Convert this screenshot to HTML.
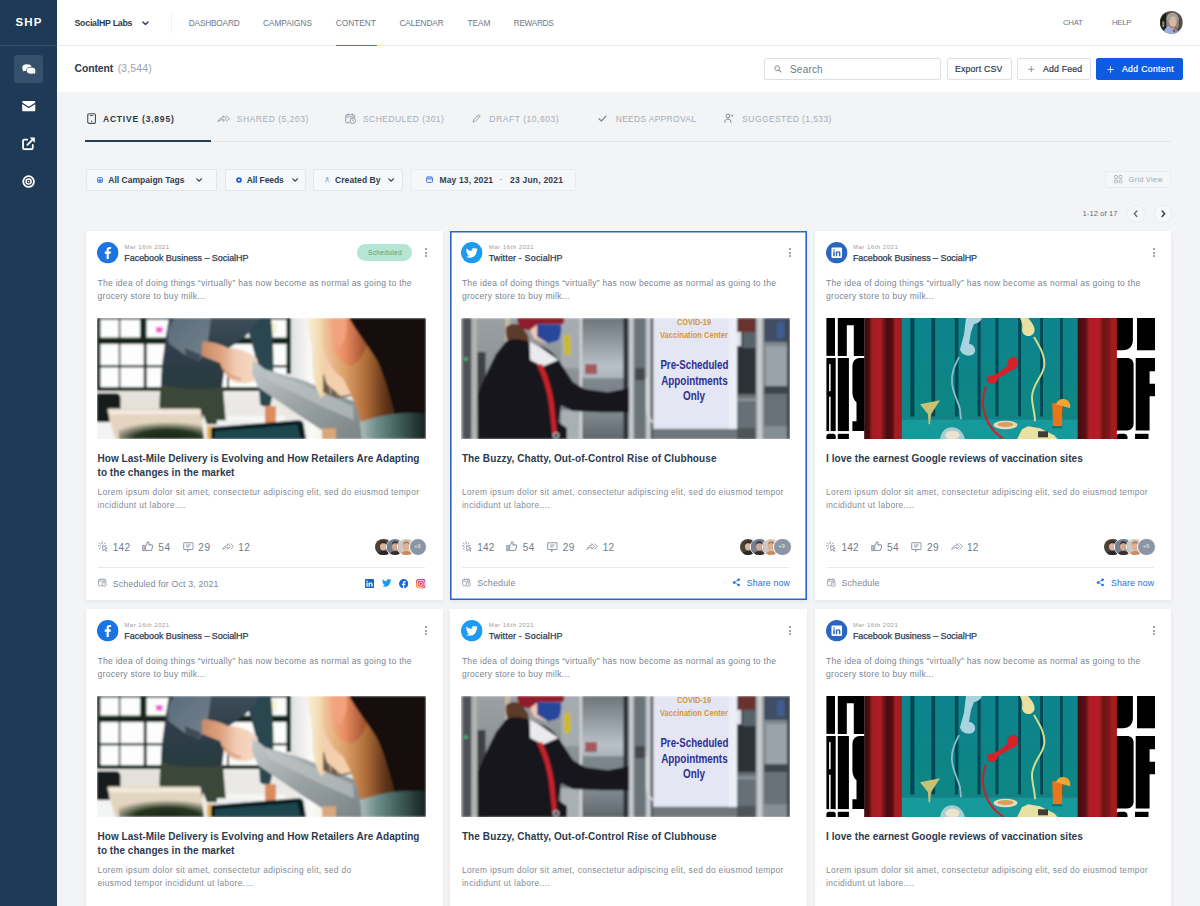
<!DOCTYPE html>
<html lang="en">
<head>
<meta charset="utf-8">
<title>SocialHP - Content</title>
<style>

*{box-sizing:border-box;margin:0;padding:0}
html,body{width:1200px;height:906px;overflow:hidden}
body{font-family:"Liberation Sans",Arial,sans-serif;background:#f3f4f6;color:#2b3a4e;position:relative;font-size:9px}
.t{position:absolute;white-space:nowrap;line-height:1}
.a{position:absolute}
svg{position:absolute;overflow:visible}
#side{position:absolute;left:0;top:0;width:57px;height:906px;background:#1f3a57}
#side .ln{position:absolute;left:0;top:45px;width:57px;height:1px;background:#35506c}
#side .act{position:absolute;left:14px;top:55px;width:29px;height:28px;border-radius:3px;background:#35506b}
#top{position:absolute;left:57px;top:0;width:1143px;height:46px;background:#fff;border-bottom:1px solid #e8ebef}
#hdr{position:absolute;left:57px;top:46px;width:1143px;height:46px;background:#fff}
.btn{position:absolute;top:58px;height:22px;border:1px solid #dde1e6;border-radius:2px;background:#fff}
.flt{position:absolute;top:169px;height:22px;border:1px solid #e3e6eb;border-radius:2px;background:#f5f7f9}
.card{position:absolute;width:356.500px;height:369px;background:#fff;box-shadow:0 2px 4px rgba(30,50,80,.07)}
.card.sel{box-shadow:inset 0 0 0 1.600px #2c64c8,0 2px 4px rgba(30,50,80,.07)}
.img{position:absolute;left:11px;top:87.200px;width:329px;height:121.300px;overflow:hidden}
.img svg{left:0;top:0}
.div{position:absolute;left:12px;top:336px;width:327px;height:1px;background:#e6e9ed}
.dot{position:absolute;width:2px;height:2px;border-radius:50%;background:#7d8795}
.av{position:absolute;width:18.600px;height:18.600px;border-radius:50%;border:.8px solid #fff;overflow:hidden}

</style>
</head>
<body>
<svg width="0" height="0" style="position:absolute;left:-10px;top:-10px"><defs>
<symbol id="i-chat" viewBox="0 0 28 22"><path d="M2.500 15.500L1 11h6z" fill="#fff"/><ellipse cx="10" cy="7.500" rx="9.500" ry="6.800" fill="#fff"/><ellipse cx="18.500" cy="13" rx="10" ry="7.300" fill="#35506b"/><path d="M26 21l1.500-5h-6z" fill="#fff"/><ellipse cx="18.500" cy="13.500" rx="8.800" ry="6.200" fill="#fff"/></symbol>
<symbol id="i-mail" viewBox="0 0 14 11"><path d="M1.300 0h11.400c.7 0 1.300.6 1.300 1.300v.4L7 6.200 0 1.700v-.4C0 .6.600 0 1.300 0zM0 3.300l7 4.500 7-4.500v6.400c0 .7-.6 1.300-1.300 1.300H1.300C.6 11 0 10.400 0 9.700z" fill="#fff"/></symbol>
<symbol id="i-ext" viewBox="0 0 14 14"><path d="M5.500 2.700H2.200C1.500 2.700 1 3.200 1 3.900v7.900c0 .7.500 1.200 1.200 1.200h7.900c.7 0 1.200-.5 1.200-1.200V8.500" fill="none" stroke="#fff" stroke-width="1.900" stroke-linecap="round"/><path d="M5.600 8.400L12 2" stroke="#fff" stroke-width="2" stroke-linecap="round"/><path d="M8 .5h5.500V6z" fill="#fff"/></symbol>
<symbol id="i-target" viewBox="0 0 14 14"><circle cx="7" cy="7" r="5.700" fill="none" stroke="#fff" stroke-width="1.900"/><circle cx="7" cy="7" r="2.700" fill="none" stroke="#fff" stroke-width="1.500"/><circle cx="7" cy="7" r=".9" fill="#fff"/></symbol>
<symbol id="i-chev" viewBox="0 0 8 5"><path d="M1 1l3 3 3-3" fill="none" stroke="#2b3a4e" stroke-width="1.500" stroke-linecap="round" stroke-linejoin="round"/></symbol>
<symbol id="i-phone" viewBox="0 0 10 12"><rect x=".8" y=".8" width="8.400" height="10.400" rx="1.500" fill="none" stroke="currentColor" stroke-width="1.200"/><path d="M3 2.600h4" stroke="currentColor" stroke-width="1" /><circle cx="5" cy="8.800" r=".8" fill="currentColor"/></symbol>
<symbol id="i-share2" viewBox="0 0 13 8"><path d="M.5 7.400C1.600 4.300 3.600 2.800 6.300 2.700V.7L9.300 3.800 6.300 6.900V4.900C3.900 4.900 2.100 5.500.5 7.400z" fill="none" stroke="currentColor" stroke-width=".95" stroke-linejoin="round"/><path d="M9.500.8l3 3-3 3" fill="none" stroke="currentColor" stroke-width="1" stroke-linejoin="round" stroke-linecap="round"/></symbol>
<symbol id="i-cal" viewBox="0 0 12 12"><path d="M10.300 5V2.800c0-.6-.4-1-1-1H1.800c-.6 0-1 .4-1 1v6.500c0 .6.400 1 1 1H5" fill="none" stroke="currentColor" stroke-width="1"/><path d="M.8 4.200h9.500M3.300.6v2.200M7.800.6v2.200" stroke="currentColor" stroke-width="1" fill="none"/><circle cx="8.300" cy="8.300" r="2.900" fill="none" stroke="currentColor" stroke-width="1"/><path d="M8.300 6.900v1.500l1 .6" fill="none" stroke="currentColor" stroke-width=".9"/></symbol>
<symbol id="i-pen" viewBox="0 0 10 10"><path d="M1.200 8.800l.5-2.400L6.700 1.400c.5-.5 1.300-.5 1.800 0s.5 1.300 0 1.800L3.500 8.200z" fill="none" stroke="currentColor" stroke-width="1" stroke-linejoin="round"/><path d="M5.800 2.300l1.800 1.800" stroke="currentColor" stroke-width=".9"/></symbol>
<symbol id="i-check" viewBox="0 0 10 8"><path d="M1 4.300l2.700 2.600L9 1.200" fill="none" stroke="currentColor" stroke-width="1.400" stroke-linecap="round" stroke-linejoin="round"/></symbol>
<symbol id="i-user" viewBox="0 0 11 11"><circle cx="4.300" cy="3.200" r="2" fill="none" stroke="currentColor" stroke-width="1.100"/><path d="M.8 10.200c0-2.200 1.500-3.600 3.500-3.600s3.500 1.400 3.500 3.600" fill="none" stroke="currentColor" stroke-width="1.100" stroke-linecap="round"/><path d="M9 1.400l.45.900.95.150-.7.650.2.950L9 3.600l-.9.450.2-.950-.7-.65.950-.150z" fill="currentColor"/></symbol>
<symbol id="i-tag" viewBox="0 0 7 7"><rect x=".6" y=".6" width="5.800" height="5.800" rx="1.200" fill="#cfe0fb" stroke="#2f6fe0" stroke-width="1"/><rect x="1.800" y="3" width="3.400" height="2.300" fill="#2f6fe0"/></symbol>
<symbol id="i-feed" viewBox="0 0 7 7"><circle cx="3.500" cy="3.500" r="3.300" fill="#1d5fdc"/><circle cx="3.500" cy="3.500" r="1.200" fill="#fff"/></symbol>
<symbol id="i-usr2" viewBox="0 0 6 7"><circle cx="3" cy="1.700" r="1.200" fill="none" stroke="#4f86e6" stroke-width=".9"/><path d="M.7 6.300C.9 4.700 1.800 3.900 3 3.900s2.100.8 2.300 2.400" fill="none" stroke="#4f86e6" stroke-width=".9" stroke-linecap="round"/></symbol>
<symbol id="i-cal2" viewBox="0 0 8 8"><rect x=".6" y="1.200" width="6.800" height="6.200" rx="1.200" fill="#e4ecfc" stroke="#3d6fe0" stroke-width="1"/><path d="M.6 3.200h6.800" stroke="#3d6fe0" stroke-width="1"/><path d="M2.400.3v1.500M5.600.3v1.500" stroke="#3d6fe0" stroke-width=".9"/></symbol>
<symbol id="i-search" viewBox="0 0 9 9"><circle cx="3.700" cy="3.700" r="2.700" fill="none" stroke="#7d8795" stroke-width="1.100"/><path d="M5.800 5.800l2.500 2.500" stroke="#7d8795" stroke-width="1.200" stroke-linecap="round"/></symbol>
<symbol id="i-plus" viewBox="0 0 8 8"><path d="M4 .8v6.400M.8 4h6.400" stroke="currentColor" stroke-width="1" stroke-linecap="round"/></symbol>
<symbol id="i-grid" viewBox="0 0 10 10"><rect x=".6" y=".6" width="3.400" height="3.400" rx=".8" fill="none" stroke="#9aa3af" stroke-width=".9"/><rect x="6" y=".6" width="3.400" height="3.400" rx=".8" fill="none" stroke="#9aa3af" stroke-width=".9"/><rect x=".6" y="6" width="3.400" height="3.400" rx=".8" fill="none" stroke="#9aa3af" stroke-width=".9"/><rect x="6" y="6" width="3.400" height="3.400" rx=".8" fill="none" stroke="#9aa3af" stroke-width=".9"/></symbol>
<symbol id="i-click" viewBox="0 0 11 12"><path d="M4.800 4.600l.9 6 1.400-1.700 1.700 2.300.9-.7-1.600-2.200 2-.6z" fill="none" stroke="currentColor" stroke-width="1" stroke-linejoin="round"/><path d="M4.600.6v1.800M1.300 1.800l1.300 1.300M.4 5h1.800M1.500 8.200l1.200-1.200M7.900 1.800L6.700 3.100M8.900 4.800H7.600" stroke="currentColor" stroke-width="1.100" stroke-linecap="round"/></symbol>
<symbol id="i-like" viewBox="0 0 12 11"><path d="M.8 4.800h1.600v5.400H.8z" fill="none" stroke="currentColor" stroke-width="1.150" stroke-linejoin="round"/><path d="M3.900 10V5l2.300-4.200c.9 0 1.500.6 1.400 1.600L7.300 4.100h2.900c.8 0 1.300.7 1.100 1.500l-.9 3.500c-.2.600-.7 1-1.300 1z" fill="none" stroke="currentColor" stroke-width="1.150" stroke-linejoin="round"/></symbol>
<symbol id="i-cmt" viewBox="0 0 12 11"><path d="M1.600.8h8.800c.5 0 .8.300.8.800v5.800c0 .5-.3.800-.8.800H6.800L4.900 10.300V8.200H1.600c-.5 0-.8-.3-.8-.8V1.600c0-.5.300-.8.800-.8z" fill="none" stroke="currentColor" stroke-width="1.150" stroke-linejoin="round"/><path d="M3.200 3.300h5.600M3.200 5.300h4" stroke="currentColor" stroke-width="1"/></symbol>
<symbol id="i-shr" viewBox="0 0 10 10"><circle cx="7.600" cy="2" r="1.400" fill="#1d6fe0"/><circle cx="2.300" cy="5" r="1.400" fill="#1d6fe0"/><circle cx="7.600" cy="8" r="1.400" fill="#1d6fe0"/><path d="M7.600 2L2.300 5l5.300 3" fill="none" stroke="#1d6fe0" stroke-width=".9"/></symbol>
<symbol id="i-fb" viewBox="0 0 22 22"><circle cx="11" cy="11" r="11" fill="#1b74e4"/><path d="M12.100 17.500v-5.600h1.900l.3-2.200h-2.200V8.300c0-.6.200-1.100 1.100-1.100h1.200V5.200c-.2 0-.9-.1-1.700-.1-1.700 0-2.900 1-2.900 3v1.600H7.900v2.200h1.900v5.600z" fill="#fff"/></symbol>
<symbol id="i-tw" viewBox="0 0 22 22"><circle cx="11" cy="11" r="11" fill="#1d9bf0"/><path d="M17.200 7.400c-.5.200-1 .3-1.500.4.500-.3.900-.8 1.100-1.400-.5.300-1 .5-1.600.6-.5-.5-1.100-.8-1.900-.8-1.400 0-2.500 1.100-2.500 2.500 0 .2 0 .4.100.6-2.100-.1-4-1.100-5.200-2.600-.2.400-.3.800-.3 1.300 0 .9.400 1.600 1.100 2.100-.4 0-.8-.1-1.100-.3 0 1.200.9 2.200 2 2.500-.4.100-.8.100-1.100 0 .3 1 1.200 1.700 2.400 1.800-1 .8-2.300 1.200-3.700 1 1.100.7 2.400 1.100 3.900 1.100 4.600 0 7.200-3.800 7.200-7.200v-.3c.4-.3.800-.800 1.100-1.300z" fill="#fff"/></symbol>
<symbol id="i-li" viewBox="0 0 22 22"><circle cx="11" cy="11" r="11" fill="#2a66bf"/><rect x="5.600" y="5.600" width="10.800" height="10.800" rx="1.300" fill="#fff"/><path d="M7.400 9.700h1.500v4.900H7.400zM8.150 7.300a.850.850 0 110 1.700.850.850 0 010-1.700zM10 9.700h1.400v.65c.3-.5.850-.8 1.600-.8 1.450 0 1.750.95 1.750 2.150v2.900h-1.500v-2.550c0-.6 0-1.300-.8-1.300s-.95.600-.95 1.250v2.600H10z" fill="#2a66bf"/></symbol>
<symbol id="s-li" viewBox="0 0 10 10"><rect width="10" height="10" rx="1" fill="#1668c5"/><path d="M1.600 3.900h1.400v4.500H1.600zM2.300 1.600a.8.800 0 110 1.600.8.800 0 010-1.600zM3.900 3.900h1.300v.6c.3-.5.800-.75 1.500-.75 1.400 0 1.700.9 1.700 2.100v2.550H7V6.100c0-.55 0-1.200-.8-1.200s-.9.600-.9 1.200v2.300H3.900z" fill="#fff"/></symbol>
<symbol id="s-tw" viewBox="0 0 12 10"><path d="M11.800 1.200c-.4.200-.9.300-1.400.4.500-.3.900-.8 1.100-1.400-.5.300-1 .500-1.500.6C9.500.3 8.900 0 8.200 0 6.800 0 5.800 1.100 5.800 2.400c0 .2 0 .4.100.5C3.800 2.800 2 1.900.8.400.6.800.5 1.200.5 1.600c0 .8.400 1.600 1.100 2-.4 0-.8-.1-1.100-.3 0 1.200.8 2.200 1.900 2.400-.4.100-.7.100-1.100 0 .3 1 1.200 1.700 2.300 1.700C2.600 8.200 1.300 8.600 0 8.500c1.100.7 2.400 1.100 3.700 1.100 4.500 0 6.900-3.700 6.900-6.900v-.3c.5-.300.9-.800 1.200-1.200z" fill="#1d9bf0"/></symbol>
<symbol id="s-fb" viewBox="0 0 10 10"><circle cx="5" cy="5" r="5" fill="#1668e0"/><path d="M5.600 9.900V6.400h1.100l.2-1.400H5.600v-.9c0-.4.100-.7.700-.7H7V2.200c-.1 0-.5-.1-1-.1-1.100 0-1.800.6-1.800 1.800V5H3.100v1.400h1.100v3.500z" fill="#fff"/></symbol>
<symbol id="s-ig" viewBox="0 0 10 10"><rect width="10" height="10" rx="2.600" fill="url(#igg)"/><rect x="1.400" y="1.400" width="7.200" height="7.200" rx="2" fill="none" stroke="#fff" stroke-width=".9"/><circle cx="5" cy="5" r="1.800" fill="none" stroke="#fff" stroke-width=".9"/><circle cx="7.400" cy="2.600" r=".5" fill="#fff"/></symbol>
<linearGradient id="igg" x1="0" y1="1" x2="1" y2="0"><stop offset="0" stop-color="#fdbb4c"/><stop offset=".35" stop-color="#f1503d"/><stop offset=".7" stop-color="#d92c86"/><stop offset="1" stop-color="#8a3ac8"/></linearGradient>
<symbol id="img1" viewBox="0 0 329 121" preserveAspectRatio="none"><defs>
<linearGradient id="g1w" x1="0" y1="0" x2="1" y2="0"><stop offset="0" stop-color="#dfe2e0"/><stop offset=".4" stop-color="#fafaf8"/><stop offset="1" stop-color="#f2ead8"/></linearGradient>
<linearGradient id="g1t" x1="0" y1="0" x2="0" y2="1"><stop offset="0" stop-color="#3d4e59"/><stop offset=".5" stop-color="#2e3d48"/><stop offset="1" stop-color="#2a3a40"/></linearGradient>
<linearGradient id="g1s" x1="0" y1="0" x2="1" y2="1"><stop offset="0" stop-color="#5a6b7a"/><stop offset="1" stop-color="#74828d"/></linearGradient>
<linearGradient id="g1h" x1="0" y1="0" x2="1" y2="0"><stop offset="0" stop-color="#c88a66"/><stop offset=".35" stop-color="#dfa684"/><stop offset=".6" stop-color="#f3cdb4"/><stop offset="1" stop-color="#f6dcc8"/></linearGradient>
<linearGradient id="g1a" x1="0" y1="0" x2="1" y2="1"><stop offset="0" stop-color="#c3c9ca"/><stop offset=".5" stop-color="#9aa2a4"/><stop offset="1" stop-color="#7a8385"/></linearGradient>
<linearGradient id="g1n" x1="0" y1="0" x2="1" y2="0"><stop offset="0" stop-color="#f2c8a0"/><stop offset=".25" stop-color="#dca06a"/><stop offset=".48" stop-color="#b06e38"/><stop offset=".7" stop-color="#5e3418"/><stop offset="1" stop-color="#1c0f08"/></linearGradient>
<linearGradient id="g1e" x1="0" y1="0" x2="1" y2="0"><stop offset="0" stop-color="#f4b892"/><stop offset=".45" stop-color="#e88c62"/><stop offset="1" stop-color="#9a4c2a"/></linearGradient>
<linearGradient id="g1b" x1="0" y1="0" x2="1" y2="0"><stop offset="0" stop-color="#faf3e4"/><stop offset=".5" stop-color="#f2d9ae"/><stop offset="1" stop-color="#e6b982"/></linearGradient>
<radialGradient id="g1l" cx=".58" cy="1" r=".7"><stop offset="0" stop-color="#142414"/><stop offset=".55" stop-color="#24361f"/><stop offset="1" stop-color="#24361f" stop-opacity="0"/></radialGradient>
<linearGradient id="g1k" x1="0" y1="0" x2="1" y2="0"><stop offset="0" stop-color="#aebcba"/><stop offset=".25" stop-color="#6f8f8b"/><stop offset=".6" stop-color="#3f5d59"/><stop offset="1" stop-color="#16211f"/></linearGradient>
</defs><g filter="url(#bl1)">

<rect width="329" height="121" fill="#f4f5f3"/>
<rect x="0" y="0" width="194" height="73" fill="#fcfdfc"/>
<g fill="#13261f">
<rect x="0" y="0" width="194" height="1.600"/>
<rect x="0" y="0" width="3.400" height="73"/>
<rect x="0" y="19.500" width="194" height="6.500"/>
<rect x="0" y="47" width="194" height="2.200"/>
<rect x="0" y="69" width="194" height="4.200"/>
<rect x="21.800" y="0" width="1.500" height="70"/>
<rect x="43.200" y="0" width="6.300" height="26"/>
<rect x="46.800" y="24" width="2.800" height="46"/>
<rect x="130" y="47" width="2" height="24"/>
<rect x="189.500" y="0" width="4.500" height="56"/>
</g>
<rect x="59" y="9" width="6.500" height="5.500" fill="#f45fd2"/>
<rect x="166" y="5" width="14" height="10" fill="#f6f5cf"/>
<!-- wall right of window -->
<rect x="194" y="0" width="50" height="121" fill="url(#g1w)"/>
<!-- lower wall / couch -->
<rect x="0" y="73" width="200" height="48" fill="#efeeea"/>
<rect x="22" y="74" width="44" height="20" fill="#e5e2db"/>
<rect x="128" y="76" width="70" height="32" fill="#ebe9e5"/>
<rect x="128" y="98" width="60" height="10" fill="#f6f6f4"/>
<!-- chair -->
<path d="M0 75h19c3 0 4.500 2 4.500 5v11H12.500v13H0z" fill="#131a1d"/>
<rect x="0" y="104" width="18" height="17" fill="#f3f4f4"/>
<!-- right arm / elbow of the man -->
<path d="M146 0h28c2 18 3 40 2 62 0 10-1 20-3 26-4 1-8 0-10-2l-2-36c-4-18-9-36-15-50z" fill="#2a4750"/>
<rect x="168" y="88" width="11" height="17" fill="#dc8b5e"/>
<!-- man torso -->
<path d="M72 0h90c-4 8-10 16-18 22l-12 8-4 16-3 24c-18 2-40 2-61-3 0-10 1-22 3-34 1-12 3-22 5-33z" fill="url(#g1t)"/>
<!-- sleeve -->
<path d="M70.800 12L77.200 0H114l-3 23.400-8.300 19.800-14.200-5.700L71.500 25z" fill="url(#g1s)"/>
<path d="M88 30l16 7-1.500 6-14-5.500z" fill="#3f4c58"/>
<!-- pants -->
<path d="M64 66c18 5 42 6 62 3l3 37h-19l-4-10-2 11H64c-2-14-2-28 0-41z" fill="#3a4737"/>
<!-- hands -->
<path d="M105 24c8-1 18 2 26 6 12 0 22 4 29 11l3 13-6 9c-9 3-18 3-24-2-5-4-8-10-10-16l-18-7z" fill="url(#g1h)"/>
<path d="M126 50c4 6 10 10 18 11" fill="none" stroke="#c88866" stroke-width="1.200"/>
<!-- woman sleeve -->
<path d="M156 42l12 9 38 11 56 23 3 36h-26l-34-22-44-30-6-14z" fill="url(#g1a)"/>
<path d="M168 53l38 13 50 22 1 14-28-12-58-28z" fill="#c2c8c9" opacity=".6"/>
<!-- blonde hair -->
<path d="M208 0h30c2 20 0 44-4 70l-10 10c-6-10-9-22-9-34 1-16-2-30-7-46z" fill="url(#g1b)"/>
<path d="M226 56l22 3 6 19-14 2-14-6z" fill="#6e5a4c"/>
<path d="M232 60l2 16M239 61l2 17" stroke="#c8b8a0" stroke-width="1"/>
<!-- ear / face skin -->
<path d="M226 0h44l22 44 24 64-50 4c-4-16-8-28-14-38l-10-10-12-8c-4-16-6-36-4-56z" fill="url(#g1n)"/>
<path d="M230 0h30l10 26c-2 10-8 18-16 22-8-2-16-8-20-20z" fill="url(#g1e)"/>
<path d="M235 0h14c2 10 0 22-6 29-5-4-8-16-8-29z" fill="#f2a27c"/>
<path d="M226 30c4 14 10 24 20 30l8 16-10 2-14-12c-4-10-5-22-4-36z" fill="#f4cfae"/>
<!-- dark hair -->
<path d="M252 0h77v104l-28 6c-6-26-12-48-20-66-8-14-20-28-29-44z" fill="#130c0a"/>
<!-- sweater bottom right -->
<path d="M263 104c20-8 46-11 66-9v26h-64z" fill="url(#g1k)"/>
<!-- laptop -->
<path d="M10.500 92c0-1 .8-1.600 2-1.600h89c1.500 0 2.300.8 2.500 2l3 28.600H18z" fill="#e4d5c1"/>
<path d="M12 92h90l1 4H13z" fill="#f3ebe0"/>
<path d="M20 96h84l3 25H22z" fill="url(#g1l)"/>
<!-- table leg & misc -->
<rect x="110" y="108" width="8" height="13" fill="#e0ae55"/>
<rect x="120" y="102" width="34" height="8" fill="#eef0f1"/>
<rect x="225" y="110" width="14" height="11" fill="#d9a77c"/>
<!-- tablet -->
<path d="M114 112c0-2 1-3 3-3.300l84-6.700c3 0 5 1 5.500 3.500l2.500 15.500H114z" fill="#0f1b22"/>
<path d="M118 113l82-6.500 4 14.500h-86z" fill="#1b4750"/>
</g></symbol><symbol id="img2" viewBox="0 0 329 121" preserveAspectRatio="none"><defs>
<linearGradient id="g2a" x1="0" y1="0" x2="0" y2="1"><stop offset="0" stop-color="#6d757b"/><stop offset=".4" stop-color="#b9c1c8"/><stop offset=".7" stop-color="#8e979d"/><stop offset="1" stop-color="#5e666b"/></linearGradient>
<linearGradient id="g2b" x1="0" y1="0" x2="0" y2="1"><stop offset="0" stop-color="#9aa0a3"/><stop offset=".5" stop-color="#8a9094"/><stop offset="1" stop-color="#6a7074"/></linearGradient>
<linearGradient id="g2c" x1="0" y1="0" x2="1" y2="0"><stop offset="0" stop-color="#9ea3a7"/><stop offset=".5" stop-color="#d5d8db"/><stop offset="1" stop-color="#8b9094"/></linearGradient>
</defs><g filter="url(#bl2)">

<rect width="329" height="121" fill="#858b90"/>
<!-- far-left dark panel -->
<rect x="0" y="0" width="10.500" height="121" fill="#4d5154"/>
<rect x="0" y="0" width="2" height="121" fill="#8a8d90"/>
<circle cx="5" cy="41" r="1.800" fill="#35c77c"/>
<rect x="10.500" y="0" width="6" height="121" fill="#b3b3b1"/>
<rect x="16.500" y="0" width="36" height="121" fill="url(#g2b)"/>
<rect x="16.500" y="34" width="8" height="87" fill="#3c4044"/>
<rect x="44" y="0" width="5" height="24" fill="#c9b9a4"/>
<!-- middle glass -->
<rect x="52" y="0" width="67" height="121" fill="url(#g2b)"/>
<rect x="100" y="0" width="18" height="50" fill="#a4acb1"/>
<rect x="103" y="17" width="6.500" height="20" fill="#cdb928"/>
<rect x="100" y="92" width="20" height="29" fill="#a9b0b4"/>
<!-- frame -->
<rect x="118.500" y="0" width="3" height="121" fill="#d0d3d6"/>
<!-- right glass of left door -->
<rect x="121.500" y="0" width="45" height="121" fill="url(#g2a)"/>
<rect x="124" y="46" width="12" height="10" fill="#a25a60"/>
<rect x="121.500" y="60" width="45" height="14" fill="#6c757b" opacity=".7"/>
<!-- door frames centre -->
<rect x="162.500" y="0" width="5" height="121" fill="#2c3034"/>
<rect x="167.500" y="0" width="6" height="121" fill="url(#g2c)"/>
<rect x="173.500" y="0" width="11" height="121" fill="#6b7379"/>
<rect x="174" y="50" width="10" height="12" fill="#44494d"/>
<rect x="184.500" y="0" width="6" height="121" fill="url(#g2c)"/><rect x="190" y="0" width="2.500" height="121" fill="#4a5055"/>
<path d="M186 60v30c0 8 3 12 6 14" fill="none" stroke="#d8dadc" stroke-width="2"/>
<!-- right of sign -->
<rect x="276" y="0" width="19" height="121" fill="#3a4146"/>
<rect x="277" y="0" width="17" height="14" fill="#6a302d"/>
<rect x="276" y="14" width="4" height="14" fill="#dfe3e8"/>
<rect x="282" y="14" width="13" height="16" fill="#59636a"/>
<rect x="276" y="30" width="19" height="46" fill="#2b3136"/>
<rect x="276" y="76" width="19" height="34" fill="#666f75"/>
<rect x="276" y="80" width="19" height="3" fill="#8a9298"/>
<rect x="276" y="110" width="19" height="11" fill="#4d555a"/>
<rect x="295" y="0" width="8" height="121" fill="url(#g2c)"/>
<rect x="303" y="0" width="26" height="121" fill="#7f888f"/>
<rect x="303" y="0" width="26" height="24" fill="#3f4d62"/>
<rect x="316" y="4" width="7" height="16" fill="#3f5d92"/>
<rect x="305" y="28" width="22" height="40" fill="#9aa3aa"/>
<rect x="303" y="68" width="26" height="8" fill="#3e464c"/>
<rect x="303" y="76" width="26" height="34" fill="#687177"/>
<rect x="303" y="108" width="26" height="13" fill="#858e94"/>
<rect x="326" y="0" width="3" height="121" fill="#3a4045"/>
<!-- bottom strip -->
<rect x="192" y="110" width="84" height="11" fill="#6f777c"/>
<!-- sign -->
<rect x="192.300" y="0" width="83.700" height="110.500" fill="#e4e6f3"/>
<rect x="268" y="0" width="8" height="110.500" fill="#eceef8"/>

<!-- person -->
<path d="M45 10c2-4 8-5 14-3l8 10 2 14-18-2c-5-5-7-12-6-19z" fill="#5b3b2b"/>
<path d="M56 0h47c1 2 0 5-2 6.500L74 8l-3 5-10-2c-3-3-5-7-5-11z" fill="#8e1e2c"/>
<path d="M69 12l8-6 23 .500c1 6 0 12-3 17l-12 2-12-5z" fill="#f0c8b4"/>
<path d="M76 6l24 .500c1 6 0 12-3 16.500l-10 2.500-11-7z" fill="#25479b"/>
<path d="M45 23.400C52 20 60 21 68 24l16 6c6 3 10 7 13.500 12L112 64l12 7 23 3 21-4v24h-28l-28.400-1.200L100 87l-2.500 17 8.500 6v11H17l-.300-45.200L26.600 53 35 36z" fill="#12161e"/>
<path d="M68.400 23.400l9 4.500 20 14-15.500 6.400-12.700-6.300z" fill="#ebebee"/>
<path d="M76 47l5-1c6 12 10 26 12 40l3 30h-4.500l-3.500-30c-2-14-6-27-12-39z" fill="#c8222c"/>
<circle cx="95" cy="117" r="2.600" fill="none" stroke="#d8d8dc" stroke-width="1"/>

</g></symbol><symbol id="img3" viewBox="0 0 329 121" preserveAspectRatio="none"><defs>
<linearGradient id="g3t" x1="0" y1="0" x2="0" y2="1"><stop offset="0" stop-color="#08838d"/><stop offset="1" stop-color="#078781"/></linearGradient><linearGradient id="g3r" x1="0" y1="0" x2="1" y2="0"><stop offset="0" stop-color="#3a090c"/><stop offset=".12" stop-color="#4a0c10"/><stop offset=".2" stop-color="#9c1a20"/><stop offset=".42" stop-color="#b01e26"/><stop offset=".52" stop-color="#74141a"/><stop offset=".62" stop-color="#470c10"/><stop offset=".76" stop-color="#5a0f13"/><stop offset=".82" stop-color="#a81c22"/><stop offset="1" stop-color="#a01a20"/></linearGradient>
<linearGradient id="g3s" x1="0" y1="0" x2="1" y2="0"><stop offset="0" stop-color="#460c10"/><stop offset=".2" stop-color="#5a0f14"/><stop offset=".3" stop-color="#b21e27"/><stop offset=".55" stop-color="#b21e27"/><stop offset=".65" stop-color="#6c1216"/><stop offset=".78" stop-color="#7a1418"/><stop offset=".85" stop-color="#a01a20"/><stop offset="1" stop-color="#a41b22"/></linearGradient>
</defs><g filter="url(#bl3)">

<rect width="329" height="121" fill="#fff"/>
<!-- teal wall -->
<rect x="75" y="0" width="177" height="121" fill="url(#g3t)"/>
<g fill="#064752">
<rect x="84.300" y="0" width="4" height="99"/><rect x="105.500" y="0" width="3.600" height="99"/><rect x="128.900" y="0" width="3.500" height="99"/><rect x="151.600" y="0" width="3" height="99"/><rect x="169.600" y="0" width="2.800" height="99"/><rect x="192.200" y="0" width="2.800" height="99"/><rect x="214.200" y="0" width="2.800" height="99"/><rect x="234" y="0" width="2.800" height="99"/>
</g>
<rect x="75" y="98.400" width="177" height="22.600" fill="#18999a"/>
<rect x="75" y="98.400" width="177" height="3" fill="#0f7278" opacity=".6"/>
<!-- curtains -->
<rect x="38.200" y="0" width="37.600" height="121" fill="url(#g3r)"/>
<!-- left letters -->
<g fill="#000">
<rect x=".400" y="0" width="8.600" height="37.800"/>
<path d="M11.800 0H38.200V37.800H27.800V7.200H20.800V37.800H11.800z"/>
<rect x=".400" y="39.900" width="9.300" height="72.900"/>
<rect x="11.800" y="39.900" width="11.100" height="72.900"/>
<path d="M26.400 49c0-5.500 2.600-9.100 7-9.100h5v72.900h-12V103h4.100V84c-2.500-2-4.100-6-4.100-10z"/>
<path d="M.400 121v-3c0-1.500 1-2.500 2.500-2.500h4.300c1.500 0 2.500 1 2.500 2.500v3z"/>
<rect x="11.800" y="115.500" width="11.100" height="5.500"/>
</g>
<rect x="3.100" y="46" width="1.500" height="27" fill="#fff"/>
<rect x="3.100" y="78.500" width="1.500" height="34.300" fill="#fff"/>
<!-- right letters -->
<g fill="#000">
<path d="M290 0h16.900v22c0 6.500-4 10.200-10 10.200H290z"/>
<rect x="311" y="0" width="18" height="32.200"/>
<path d="M290 39.900h11c4 0 6.600 2.600 6.600 6.600v59c0 4-2.600 6.600-6.600 6.600h-11z"/>
<path d="M309.700 39.900H329V53h-5.400v12.500H329V78h-5.400v34.100h-13.900z"/>
<path d="M290 121v-2c0-2 1.500-3.500 3.500-3.500h4.500c2 0 3.500 1.500 3.500 3.500v2z"/>
<rect x="309" y="115.500" width="13.500" height="5.500"/>
</g>
<rect x="251.700" y="0" width="39.200" height="121" fill="url(#g3s)"/>
<!-- blue phone -->
<path d="M140 0h16c-1 3-4 5.500-8 6l-3 8-2 12c3 0 5.500 2 6 5s-1 6-5 6.500c-5 .500-9-2-10-6 1-5 3-10 4-15z" fill="#a9d3de"/>
<path d="M133 39c-4 8-8 16-7 26s6 18 8 26l1 10" fill="none" stroke="#8dbcc8" stroke-width="1.800"/>
<path d="M114 121c1-7 5-12 12-12s11 5 13 12z" fill="#a8cfd0"/>
<ellipse cx="126.500" cy="117" rx="7" ry="4.500" fill="#ece3cf"/>
<!-- martini -->
<path d="M94 86l20-4-9 14-1 10h-1.500l-.5-10z" fill="#c9c274"/>
<!-- red phone -->
<path d="M164 58c4-1 8-3 12-6l6-5c-1-3 0-6 3-7.500s6 0 7 3.500c1 4-2 8-6 9l-14 8c0 3-2 5-5 5.500s-6-1-6-4 1-4 3-4z" fill="#d3202b"/>
<path d="M160 68c-4 10-4 22 0 32s10 16 18 21" fill="none" stroke="#c8202a" stroke-width="2"/>
<!-- yellow phone -->
<path d="M194 0h8c3 3 6 7 6.500 11s-2 7-6 7-6-2.500-6.500-6c1-4 0-8-2-12z" fill="#e9df9e"/>
<path d="M208 19c6 10 12 20 10 30s-12 18-12 30c0 8 3 16 3 24" fill="none" stroke="#cfdc92" stroke-width="2"/>
<path d="M191 121l5-10 6-3 12 2 14 7 4 4z" fill="#e9e1a4"/>
<rect x="212" y="113" width="10" height="6" fill="#3c3c34"/>
<!-- plate -->
<ellipse cx="179.500" cy="106.800" rx="12" ry="4.200" fill="#ead9c0"/>
<ellipse cx="179.500" cy="106.300" rx="8" ry="2.500" fill="#d9a05c"/>
<!-- drink -->
<path d="M226.200 85h10.600l-.8 23h-9z" fill="#e7741f"/>
<path d="M230 86c1-4 5-6 9-5s6 5 5 9z" fill="#f2a531"/>
<rect x="226" y="108" width="10" height="2" fill="#0e6f74"/>
</g></symbol><filter id="bl1" filterUnits="userSpaceOnUse" x="0" y="0" width="329" height="121"><feGaussianBlur stdDeviation="0.9"/></filter><filter id="bl2" filterUnits="userSpaceOnUse" x="0" y="0" width="329" height="121"><feGaussianBlur stdDeviation="0.8"/></filter><filter id="bl3" filterUnits="userSpaceOnUse" x="0" y="0" width="329" height="121"><feGaussianBlur stdDeviation="0.6"/></filter></defs></svg>
<div id="side"><div class="ln"></div><div class="act"></div></div>
<div class="t" style="left:15.50px;top:16.87px;font-size:11.5px;color:#fff;font-weight:bold;letter-spacing:1.15px;">SHP</div>
<svg style="left:21.60px;top:64.00px;width:13.8px;height:10.8px;"><use href="#i-chat"/></svg>
<svg style="left:21.70px;top:101.30px;width:13.6px;height:10.4px;"><use href="#i-mail"/></svg>
<svg style="left:21.50px;top:137.20px;width:13.4px;height:13.2px;"><use href="#i-ext"/></svg>
<svg style="left:21.80px;top:174.80px;width:13.2px;height:13.2px;"><use href="#i-target"/></svg>
<div id="top"></div><div id="hdr"></div>
<div class="t" style="left:74.50px;top:18.55px;font-size:8.8px;color:#2b3a4e;font-weight:bold;letter-spacing:-0.25px;">SocialHP Labs</div>
<svg style="left:141.50px;top:20.50px;width:7px;height:4.5px;"><use href="#i-chev"/></svg>
<div class="a" style="left:171px;top:12px;width:1px;height:21px;background:#f0f1f4"></div>
<div class="t" style="left:188.75px;top:19.17px;font-size:8.3px;color:#6d7889;letter-spacing:-0.199px;">DASHBOARD</div>
<div class="t" style="left:263.00px;top:19.17px;font-size:8.3px;color:#6d7889;letter-spacing:-0.025px;">CAMPAIGNS</div>
<div class="t" style="left:335.75px;top:19.17px;font-size:8.3px;color:#6d7889;letter-spacing:-0.02px;">CONTENT</div>
<div class="t" style="left:399.50px;top:19.17px;font-size:8.3px;color:#6d7889;letter-spacing:-0.138px;">CALENDAR</div>
<div class="t" style="left:467.50px;top:19.17px;font-size:8.3px;color:#6d7889;letter-spacing:-0.021px;">TEAM</div>
<div class="t" style="left:513.75px;top:19.17px;font-size:8.3px;color:#6d7889;letter-spacing:-0.352px;">REWARDS</div>
<div class="a" style="left:335.5px;top:44.5px;width:41px;height:1.5px;background:#3b7ddd"></div>
<div class="t" style="left:1062.90px;top:19.30px;font-size:7.8px;color:#6d7889;letter-spacing:-0.25px;">CHAT</div>
<div class="t" style="left:1112.00px;top:19.30px;font-size:7.8px;color:#6d7889;letter-spacing:-0.3px;">HELP</div>
<svg style="left:1159.9px;top:11.1px;width:22.8px;height:22.8px" viewBox="0 0 24 24"><defs><clipPath id="avc"><circle cx="12" cy="12" r="12"/></clipPath><filter id="avb" x="-10%" y="-10%" width="120%" height="120%"><feGaussianBlur stdDeviation="0.7"/></filter></defs><g clip-path="url(#avc)"><rect width="24" height="24" fill="#4f4a44"/><g filter="url(#avb)"><rect x="-2" y="-2" width="8.500" height="28" fill="#1c1c19"/><rect x="2.500" y="11" width="2" height="6" fill="#8e9384"/><ellipse cx="13.200" cy="9" rx="6.600" ry="7.500" fill="#a59c92"/><path d="M7.500 9c-1.500 4-1 8 .5 10l4-2zM19 9c1.500 4 1 8-.5 10l-4-3z" fill="#8d857c"/><ellipse cx="13.600" cy="12" rx="3.900" ry="4.800" fill="#dcb4a3"/><path d="M10.500 7.500c1-2.500 5.500-3 7 .5-2.500-1-4.500-1-7-.5z" fill="#c9c0b4"/><path d="M12 16h3.500l.5 4h-4z" fill="#c58f78"/><path d="M9 15.500l3.500 3 3 5.500H3.500l1.500-5z" fill="#9cacE4"/><path d="M16 18.500l3 2v4h-4z" fill="#7f8fc8"/></g></g><circle cx="12" cy="12" r="11.800" fill="none" stroke="#fff" stroke-opacity=".25" stroke-width=".4"/></svg>
<div class="t" style="left:74.50px;top:64.20px;font-size:10.4px;color:#2b3a4e;font-weight:bold;letter-spacing:-0.1px;">Content</div>
<div class="t" style="left:117.75px;top:64.20px;font-size:10.4px;color:#9aa3af;letter-spacing:0.16px;">(3,544)</div>
<div class="btn" style="left:764px;width:176.500px"></div>
<svg style="left:773.50px;top:65.20px;width:7.8px;height:7.8px;"><use href="#i-search"/></svg>
<div class="t" style="left:790.00px;top:65.23px;font-size:10px;color:#6f7a88;letter-spacing:0.2px;">Search</div>
<div class="btn" style="left:946.5px;width:65px"></div>
<div class="t" style="left:955.00px;top:65.44px;font-size:8.7px;color:#2b3a4e;letter-spacing:0.2px;-webkit-text-stroke:.2px #2b3a4e;">Export CSV</div>
<div class="btn" style="left:1017px;width:73.500px"></div>
<svg style="left:1027.50px;top:65.80px;width:6.6px;height:6.6px;color:#7d8795;"><use href="#i-plus"/></svg>
<div class="t" style="left:1043.00px;top:65.44px;font-size:8.7px;color:#2b3a4e;letter-spacing:0.2px;-webkit-text-stroke:.2px #2b3a4e;">Add Feed</div>
<div class="btn" style="left:1096px;width:87px;background:#0c5be0;border-color:#0c5be0"></div>
<svg style="left:1106.50px;top:65.60px;width:7px;height:7px;color:#fff;"><use href="#i-plus"/></svg>
<div class="t" style="left:1122.00px;top:65.44px;font-size:8.7px;color:#fff;letter-spacing:0.33px;-webkit-text-stroke:.2px #fff;">Add Content</div>
<div class="a" style="left:86px;top:140.500px;width:1085px;height:1px;background:#e2e5ea"></div>
<div class="a" style="left:85px;top:140px;width:126px;height:2px;background:#253f5c"></div>
<svg style="left:87.00px;top:112.90px;width:9.2px;height:11.2px;color:#454d59;"><use href="#i-phone"/></svg>
<div class="t" style="left:103.00px;top:114.80px;font-size:8.5px;color:#2b3a4e;font-weight:bold;letter-spacing:0.79px;">ACTIVE (3,895)</div>
<svg style="left:217.00px;top:114.50px;width:13px;height:7.5px;color:#8f98a5;"><use href="#i-share2"/></svg>
<div class="t" style="left:236.75px;top:114.80px;font-size:8.5px;color:#a6adb8;letter-spacing:0.52px;">SHARED (5,203)</div>
<svg style="left:345.00px;top:112.50px;width:11.3px;height:11.3px;color:#8f98a5;"><use href="#i-cal"/></svg>
<div class="t" style="left:363.00px;top:114.80px;font-size:8.5px;color:#a6adb8;letter-spacing:0.44px;">SCHEDULED (301)</div>
<svg style="left:472.00px;top:113.80px;width:9px;height:9px;color:#8f98a5;"><use href="#i-pen"/></svg>
<div class="t" style="left:489.30px;top:114.80px;font-size:8.5px;color:#a6adb8;letter-spacing:0.55px;">DRAFT (10,603)</div>
<svg style="left:598.30px;top:115.00px;width:9px;height:7px;color:#7d8795;"><use href="#i-check"/></svg>
<div class="t" style="left:615.70px;top:114.80px;font-size:8.5px;color:#a6adb8;letter-spacing:0.3px;">NEEDS APPROVAL</div>
<svg style="left:724.30px;top:113.00px;width:10px;height:10px;color:#7d8795;"><use href="#i-user"/></svg>
<div class="t" style="left:742.30px;top:114.80px;font-size:8.5px;color:#a6adb8;letter-spacing:0.4px;">SUGGESTED (1,533)</div>
<div class="flt" style="left:86px;width:130.700px"></div>
<svg style="left:97.00px;top:177.00px;width:6px;height:6px;"><use href="#i-tag"/></svg>
<div class="t" style="left:108.25px;top:175.80px;font-size:8.5px;color:#2f3d52;font-weight:bold;letter-spacing:0.02px;">All Campaign Tags</div>
<svg style="left:196.20px;top:178.30px;width:6.3px;height:4px;"><use href="#i-chev"/></svg>
<div class="flt" style="left:224.500px;width:81.300px"></div>
<svg style="left:235.50px;top:177.00px;width:6px;height:6px;"><use href="#i-feed"/></svg>
<div class="t" style="left:246.75px;top:175.80px;font-size:8.5px;color:#2f3d52;font-weight:bold;letter-spacing:-0.1px;">All Feeds</div>
<svg style="left:292.00px;top:178.30px;width:6.3px;height:4px;"><use href="#i-chev"/></svg>
<div class="flt" style="left:313.200px;width:90px"></div>
<svg style="left:325.00px;top:177.20px;width:4.6px;height:5.6px;"><use href="#i-usr2"/></svg>
<div class="t" style="left:335.00px;top:175.80px;font-size:8.5px;color:#2f3d52;font-weight:bold;letter-spacing:0.07px;">Created By</div>
<svg style="left:388.00px;top:178.30px;width:6.3px;height:4px;"><use href="#i-chev"/></svg>
<div class="flt" style="left:411.200px;width:165px;border-color:#e9ecf0"></div>
<svg style="left:425.70px;top:176.30px;width:7px;height:7px;"><use href="#i-cal2"/></svg>
<div class="t" style="left:439.50px;top:175.80px;font-size:8.5px;color:#2f3d52;font-weight:bold;letter-spacing:0.14px;">May 13, 2021</div>
<div class="t" style="left:499.50px;top:175.30px;font-size:8.5px;color:#9aa3af;">-</div>
<div class="t" style="left:510.00px;top:175.80px;font-size:8.5px;color:#2f3d52;font-weight:bold;letter-spacing:0.22px;">23 Jun, 2021</div>
<div class="a" style="left:1105px;top:171px;width:66px;height:17px;border:1px solid #e8ebef;border-radius:2px;background:#f4f6f8"></div>
<svg style="left:1113.80px;top:175.30px;width:8.6px;height:8.6px;"><use href="#i-grid"/></svg>
<div class="t" style="left:1128.80px;top:176.07px;font-size:7px;color:#9aa3af;letter-spacing:0.43px;">Grid View</div>
<div class="t" style="left:1082.50px;top:210.45px;font-size:7.5px;color:#5f6b7a;letter-spacing:0.13px;">1-12 of 17</div>
<div class="a" style="left:1126.500px;top:204.500px;width:18px;height:18px;border-radius:50%;background:#f6f7f9;border:1px solid #e9ecf0"></div>
<svg style="left:1132.800px;top:210px;width:5px;height:7.500px" viewBox="0 0 5 8"><path d="M4 1L1.200 4 4 7" fill="none" stroke="#5f6b7a" stroke-width="1.400" stroke-linecap="round" stroke-linejoin="round"/></svg>
<div class="a" style="left:1153.500px;top:204.500px;width:18px;height:18px;border-radius:50%;background:#f8f9fb;border:1px solid #e9ecf0"></div>
<svg style="left:1160.500px;top:210px;width:5px;height:7.500px" viewBox="0 0 5 8"><path d="M1 1l2.800 3L1 7" fill="none" stroke="#2b3a4e" stroke-width="1.500" stroke-linecap="round" stroke-linejoin="round"/></svg>
<div class="card" style="left:86px;top:231px"><svg style="left:11.00px;top:10.90px;width:21.5px;height:21.5px;"><use href="#i-fb"/></svg><div class="t" style="left:38.30px;top:12.64px;font-size:6.1px;color:#969eaa;letter-spacing:0.47px;">Mar 16th 2021</div><div class="t" style="left:38.30px;top:22.78px;font-size:9px;color:#2f3d52;letter-spacing:-0.05px;-webkit-text-stroke:.25px #2f3d52;">Facebook Business – SocialHP</div><div class="a" style="left:271.300px;top:13.300px;width:54.700px;height:16.400px;border-radius:8.200px;background:#b5e6d3"></div><div class="t" style="left:282.00px;top:18.90px;font-size:6.5px;color:#4f9f7a;letter-spacing:0.35px;">Scheduled</div><div class="dot" style="left:338.700px;top:17.2px"></div><div class="dot" style="left:338.700px;top:20.6px"></div><div class="dot" style="left:338.700px;top:24.0px"></div><div class="t" style="left:11.50px;top:47.60px;font-size:8.5px;color:#7a8492;letter-spacing:0.29px;">The idea of doing things “virtually” has now become as normal as going to the</div><div class="t" style="left:11.50px;top:60.60px;font-size:8.5px;color:#7a8492;letter-spacing:0.29px;">grocery store to buy milk...</div><div class="img"><svg width="329" height="121.300" viewBox="0 0 329 121" preserveAspectRatio="none"><use href="#img1" width="329" height="121"/></svg></div><div class="t" style="left:11.50px;top:222.73px;font-size:10px;color:#2b3a4e;font-weight:bold;letter-spacing:0.05px;">How Last-Mile Delivery is Evolving and How Retailers Are Adapting</div><div class="t" style="left:11.50px;top:236.73px;font-size:10px;color:#2b3a4e;font-weight:bold;letter-spacing:0.05px;">to the changes in the market</div><div class="t" style="left:11.50px;top:256.89px;font-size:8.4px;color:#828b98;letter-spacing:0.36px;">Lorem ipsum dolor sit amet, consectetur adipiscing elit, sed do eiusmod tempor</div><div class="t" style="left:11.50px;top:269.89px;font-size:8.4px;color:#828b98;letter-spacing:0.36px;">incididunt ut labore....</div><svg style="left:11.50px;top:310.00px;width:10px;height:11.5px;color:#8f98a5;"><use href="#i-click"/></svg><div class="t" style="left:26.80px;top:312.04px;font-size:10px;color:#6f7a88;letter-spacing:0.25px;">142</div><svg style="left:56.00px;top:310.30px;width:11.3px;height:10.4px;color:#8f98a5;"><use href="#i-like"/></svg><div class="t" style="left:72.30px;top:312.04px;font-size:10px;color:#6f7a88;letter-spacing:0.55px;">54</div><svg style="left:96.50px;top:310.80px;width:10.8px;height:10px;color:#8f98a5;"><use href="#i-cmt"/></svg><div class="t" style="left:112.30px;top:312.04px;font-size:10px;color:#6f7a88;letter-spacing:0.55px;">29</div><svg style="left:136.00px;top:311.60px;width:12px;height:7.2px;color:#8f98a5;"><use href="#i-share2"/></svg><div class="t" style="left:152.30px;top:312.04px;font-size:10px;color:#6f7a88;letter-spacing:0.3px;">12</div><svg class="av" style="left:288.4px;top:306.5px" viewBox="0 0 18 18"><rect width="18" height="18" fill="#4a4238"/><ellipse cx="9" cy="8" rx="3.600" ry="4.400" fill="#d9b49a"/><path d="M5.200 6.500C5.500 3.500 7 2.500 9 2.500s3.500 1 3.800 4C11.500 5 10.500 4.600 9 4.600S6.500 5 5.200 6.500z" fill="#2a2622"/><path d="M2.500 18c.5-3.500 3-5 6.500-5s6 1.500 6.500 5z" fill="#2a2622"/></svg><svg class="av" style="left:299.8px;top:306.5px" viewBox="0 0 18 18"><rect width="18" height="18" fill="#6f7f96"/><ellipse cx="9" cy="8" rx="3.600" ry="4.400" fill="#d2a78c"/><path d="M5.200 6.500C5.500 3.500 7 2.500 9 2.500s3.500 1 3.800 4C11.500 5 10.500 4.600 9 4.600S6.500 5 5.200 6.500z" fill="#3a2e28"/><path d="M2.500 18c.5-3.500 3-5 6.500-5s6 1.500 6.500 5z" fill="#3a2e28"/></svg><svg class="av" style="left:311.2px;top:306.5px" viewBox="0 0 18 18"><rect width="18" height="18" fill="#cfc8c0"/><ellipse cx="9" cy="8" rx="3.600" ry="4.400" fill="#e0b090"/><path d="M5.200 6.500C5.500 3.500 7 2.500 9 2.500s3.500 1 3.800 4C11.500 5 10.500 4.600 9 4.600S6.500 5 5.200 6.500z" fill="#b87850"/><path d="M2.500 18c.5-3.500 3-5 6.500-5s6 1.500 6.500 5z" fill="#c98a60"/></svg><div class="av" style="left:322.6px;top:306.5px;background:#8b95a5"></div><div class="t" style="left:328.20px;top:313.04px;font-size:5.5px;color:#e8ebf0;">+9</div><div class="div"></div><svg style="left:12.00px;top:347.40px;width:9px;height:9px;color:#87909d;"><use href="#i-cal"/></svg><div class="t" style="left:26.80px;top:348.85px;font-size:8.8px;color:#7d8795;letter-spacing:0.14px;">Scheduled for Oct 3, 2021</div><svg style="left:278.70px;top:347.70px;width:9.1px;height:9.1px;"><use href="#s-li"/></svg><svg style="left:295.70px;top:348.20px;width:9.6px;height:8px;"><use href="#s-tw"/></svg><svg style="left:312.80px;top:347.70px;width:9.4px;height:9.4px;"><use href="#s-fb"/></svg><svg style="left:330.20px;top:347.70px;width:9.5px;height:9.5px;"><use href="#s-ig"/></svg></div>
<div class="card sel" style="left:450.4px;top:231px"><svg style="left:11.00px;top:10.90px;width:21.5px;height:21.5px;"><use href="#i-tw"/></svg><div class="t" style="left:38.30px;top:12.64px;font-size:6.1px;color:#969eaa;letter-spacing:0.47px;">Mar 16th 2021</div><div class="t" style="left:38.30px;top:22.78px;font-size:9px;color:#2f3d52;letter-spacing:0.14px;-webkit-text-stroke:.25px #2f3d52;">Twitter - SocialHP</div><div class="dot" style="left:338.700px;top:17.2px"></div><div class="dot" style="left:338.700px;top:20.6px"></div><div class="dot" style="left:338.700px;top:24.0px"></div><div class="t" style="left:11.50px;top:47.60px;font-size:8.5px;color:#7a8492;letter-spacing:0.29px;">The idea of doing things “virtually” has now become as normal as going to the</div><div class="t" style="left:11.50px;top:60.60px;font-size:8.5px;color:#7a8492;letter-spacing:0.29px;">grocery store to buy milk...</div><div class="img"><svg width="329" height="121.300" viewBox="0 0 329 121" preserveAspectRatio="none"><use href="#img2" width="329" height="121"/></svg><svg width="329" height="121.300" viewBox="0 0 329 121" preserveAspectRatio="none"><g font-family="Liberation Sans, Arial, sans-serif" font-weight="bold" text-anchor="middle"><text x="233" y="7.400" font-size="8.400" fill="#d6963a" textLength="34" lengthAdjust="spacingAndGlyphs">COVID-19</text><text x="233" y="19.500" font-size="8.400" fill="#d6963a" textLength="68" lengthAdjust="spacingAndGlyphs">Vaccination Center</text><text x="233.400" y="51.200" font-size="13.400" fill="#2d2f92" textLength="68" lengthAdjust="spacingAndGlyphs">Pre-Scheduled</text><text x="233.400" y="66.800" font-size="13.400" fill="#2d2f92" textLength="66.500" lengthAdjust="spacingAndGlyphs">Appointments</text><text x="233" y="82.200" font-size="13.400" fill="#2d2f92" textLength="22" lengthAdjust="spacingAndGlyphs">Only</text></g></svg></div><div class="t" style="left:11.50px;top:222.73px;font-size:10px;color:#2b3a4e;font-weight:bold;letter-spacing:0.1px;">The Buzzy, Chatty, Out-of-Control Rise of Clubhouse</div><div class="t" style="left:11.50px;top:256.89px;font-size:8.4px;color:#828b98;letter-spacing:0.36px;">Lorem ipsum dolor sit amet, consectetur adipiscing elit, sed do eiusmod tempor</div><div class="t" style="left:11.50px;top:269.89px;font-size:8.4px;color:#828b98;letter-spacing:0.36px;">incididunt ut labore....</div><svg style="left:11.50px;top:310.00px;width:10px;height:11.5px;color:#8f98a5;"><use href="#i-click"/></svg><div class="t" style="left:26.80px;top:312.04px;font-size:10px;color:#6f7a88;letter-spacing:0.25px;">142</div><svg style="left:56.00px;top:310.30px;width:11.3px;height:10.4px;color:#8f98a5;"><use href="#i-like"/></svg><div class="t" style="left:72.30px;top:312.04px;font-size:10px;color:#6f7a88;letter-spacing:0.55px;">54</div><svg style="left:96.50px;top:310.80px;width:10.8px;height:10px;color:#8f98a5;"><use href="#i-cmt"/></svg><div class="t" style="left:112.30px;top:312.04px;font-size:10px;color:#6f7a88;letter-spacing:0.55px;">29</div><svg style="left:136.00px;top:311.60px;width:12px;height:7.2px;color:#8f98a5;"><use href="#i-share2"/></svg><div class="t" style="left:152.30px;top:312.04px;font-size:10px;color:#6f7a88;letter-spacing:0.3px;">12</div><svg class="av" style="left:288.4px;top:306.5px" viewBox="0 0 18 18"><rect width="18" height="18" fill="#4a4238"/><ellipse cx="9" cy="8" rx="3.600" ry="4.400" fill="#d9b49a"/><path d="M5.200 6.500C5.500 3.500 7 2.500 9 2.500s3.500 1 3.800 4C11.500 5 10.500 4.600 9 4.600S6.500 5 5.200 6.500z" fill="#2a2622"/><path d="M2.500 18c.5-3.500 3-5 6.500-5s6 1.500 6.500 5z" fill="#2a2622"/></svg><svg class="av" style="left:299.8px;top:306.5px" viewBox="0 0 18 18"><rect width="18" height="18" fill="#6f7f96"/><ellipse cx="9" cy="8" rx="3.600" ry="4.400" fill="#d2a78c"/><path d="M5.200 6.500C5.500 3.500 7 2.500 9 2.500s3.500 1 3.800 4C11.500 5 10.500 4.600 9 4.600S6.500 5 5.200 6.500z" fill="#3a2e28"/><path d="M2.500 18c.5-3.500 3-5 6.500-5s6 1.500 6.500 5z" fill="#3a2e28"/></svg><svg class="av" style="left:311.2px;top:306.5px" viewBox="0 0 18 18"><rect width="18" height="18" fill="#cfc8c0"/><ellipse cx="9" cy="8" rx="3.600" ry="4.400" fill="#e0b090"/><path d="M5.200 6.500C5.500 3.500 7 2.500 9 2.500s3.500 1 3.800 4C11.500 5 10.500 4.600 9 4.600S6.500 5 5.200 6.500z" fill="#b87850"/><path d="M2.500 18c.5-3.500 3-5 6.500-5s6 1.500 6.500 5z" fill="#c98a60"/></svg><div class="av" style="left:322.6px;top:306.5px;background:#8b95a5"></div><div class="t" style="left:328.20px;top:313.04px;font-size:5.5px;color:#e8ebf0;">+9</div><div class="div"></div><svg style="left:12.00px;top:347.40px;width:9px;height:9px;color:#87909d;"><use href="#i-cal"/></svg><div class="t" style="left:26.80px;top:348.35px;font-size:8.8px;color:#7d8795;letter-spacing:0.2px;">Schedule</div><svg style="left:281.30px;top:347.20px;width:8.8px;height:8.8px;"><use href="#i-shr"/></svg><div class="t" style="left:296.30px;top:348.35px;font-size:8.8px;color:#1d6fe0;letter-spacing:0.15px;">Share now</div></div>
<div class="card" style="left:814.6px;top:231px"><svg style="left:11.00px;top:10.90px;width:21.5px;height:21.5px;"><use href="#i-li"/></svg><div class="t" style="left:38.30px;top:12.64px;font-size:6.1px;color:#969eaa;letter-spacing:0.47px;">Mar 16th 2021</div><div class="t" style="left:38.30px;top:22.78px;font-size:9px;color:#2f3d52;letter-spacing:-0.05px;-webkit-text-stroke:.25px #2f3d52;">Facebook Business – SocialHP</div><div class="dot" style="left:338.700px;top:17.2px"></div><div class="dot" style="left:338.700px;top:20.6px"></div><div class="dot" style="left:338.700px;top:24.0px"></div><div class="t" style="left:11.50px;top:47.60px;font-size:8.5px;color:#7a8492;letter-spacing:0.29px;">The idea of doing things “virtually” has now become as normal as going to the</div><div class="t" style="left:11.50px;top:60.60px;font-size:8.5px;color:#7a8492;letter-spacing:0.29px;">grocery store to buy milk...</div><div class="img"><svg width="329" height="121.300" viewBox="0 0 329 121" preserveAspectRatio="none"><use href="#img3" width="329" height="121"/></svg></div><div class="t" style="left:11.50px;top:222.73px;font-size:10px;color:#2b3a4e;font-weight:bold;letter-spacing:0.05px;">I love the earnest Google reviews of vaccination sites</div><div class="t" style="left:11.50px;top:256.89px;font-size:8.4px;color:#828b98;letter-spacing:0.36px;">Lorem ipsum dolor sit amet, consectetur adipiscing elit, sed do eiusmod tempor</div><div class="t" style="left:11.50px;top:269.89px;font-size:8.4px;color:#828b98;letter-spacing:0.36px;">incididunt ut labore....</div><svg style="left:11.50px;top:310.00px;width:10px;height:11.5px;color:#8f98a5;"><use href="#i-click"/></svg><div class="t" style="left:26.80px;top:312.04px;font-size:10px;color:#6f7a88;letter-spacing:0.25px;">142</div><svg style="left:56.00px;top:310.30px;width:11.3px;height:10.4px;color:#8f98a5;"><use href="#i-like"/></svg><div class="t" style="left:72.30px;top:312.04px;font-size:10px;color:#6f7a88;letter-spacing:0.55px;">54</div><svg style="left:96.50px;top:310.80px;width:10.8px;height:10px;color:#8f98a5;"><use href="#i-cmt"/></svg><div class="t" style="left:112.30px;top:312.04px;font-size:10px;color:#6f7a88;letter-spacing:0.55px;">29</div><svg style="left:136.00px;top:311.60px;width:12px;height:7.2px;color:#8f98a5;"><use href="#i-share2"/></svg><div class="t" style="left:152.30px;top:312.04px;font-size:10px;color:#6f7a88;letter-spacing:0.3px;">12</div><svg class="av" style="left:288.4px;top:306.5px" viewBox="0 0 18 18"><rect width="18" height="18" fill="#4a4238"/><ellipse cx="9" cy="8" rx="3.600" ry="4.400" fill="#d9b49a"/><path d="M5.200 6.500C5.500 3.500 7 2.500 9 2.500s3.500 1 3.800 4C11.500 5 10.500 4.600 9 4.600S6.500 5 5.200 6.500z" fill="#2a2622"/><path d="M2.500 18c.5-3.500 3-5 6.500-5s6 1.500 6.500 5z" fill="#2a2622"/></svg><svg class="av" style="left:299.8px;top:306.5px" viewBox="0 0 18 18"><rect width="18" height="18" fill="#6f7f96"/><ellipse cx="9" cy="8" rx="3.600" ry="4.400" fill="#d2a78c"/><path d="M5.200 6.500C5.500 3.500 7 2.500 9 2.500s3.500 1 3.800 4C11.500 5 10.500 4.600 9 4.600S6.500 5 5.200 6.500z" fill="#3a2e28"/><path d="M2.500 18c.5-3.500 3-5 6.500-5s6 1.500 6.500 5z" fill="#3a2e28"/></svg><svg class="av" style="left:311.2px;top:306.5px" viewBox="0 0 18 18"><rect width="18" height="18" fill="#cfc8c0"/><ellipse cx="9" cy="8" rx="3.600" ry="4.400" fill="#e0b090"/><path d="M5.200 6.500C5.500 3.500 7 2.500 9 2.500s3.500 1 3.800 4C11.500 5 10.500 4.600 9 4.600S6.500 5 5.200 6.500z" fill="#b87850"/><path d="M2.500 18c.5-3.500 3-5 6.500-5s6 1.500 6.500 5z" fill="#c98a60"/></svg><div class="av" style="left:322.6px;top:306.5px;background:#8b95a5"></div><div class="t" style="left:328.20px;top:313.04px;font-size:5.5px;color:#e8ebf0;">+9</div><div class="div"></div><svg style="left:12.00px;top:347.40px;width:9px;height:9px;color:#87909d;"><use href="#i-cal"/></svg><div class="t" style="left:26.80px;top:348.35px;font-size:8.8px;color:#7d8795;letter-spacing:0.2px;">Schedule</div><svg style="left:281.30px;top:347.20px;width:8.8px;height:8.8px;"><use href="#i-shr"/></svg><div class="t" style="left:296.30px;top:348.35px;font-size:8.8px;color:#1d6fe0;letter-spacing:0.15px;">Share now</div></div>
<div class="card" style="left:86px;top:609px"><svg style="left:11.00px;top:10.90px;width:21.5px;height:21.5px;"><use href="#i-fb"/></svg><div class="t" style="left:38.30px;top:12.64px;font-size:6.1px;color:#969eaa;letter-spacing:0.47px;">Mar 16th 2021</div><div class="t" style="left:38.30px;top:22.78px;font-size:9px;color:#2f3d52;letter-spacing:-0.05px;-webkit-text-stroke:.25px #2f3d52;">Facebook Business – SocialHP</div><div class="dot" style="left:338.700px;top:17.2px"></div><div class="dot" style="left:338.700px;top:20.6px"></div><div class="dot" style="left:338.700px;top:24.0px"></div><div class="t" style="left:11.50px;top:47.60px;font-size:8.5px;color:#7a8492;letter-spacing:0.29px;">The idea of doing things “virtually” has now become as normal as going to the</div><div class="t" style="left:11.50px;top:60.60px;font-size:8.5px;color:#7a8492;letter-spacing:0.29px;">grocery store to buy milk...</div><div class="img"><svg width="329" height="121.300" viewBox="0 0 329 121" preserveAspectRatio="none"><use href="#img1" width="329" height="121"/></svg></div><div class="t" style="left:11.50px;top:222.73px;font-size:10px;color:#2b3a4e;font-weight:bold;letter-spacing:0.05px;">How Last-Mile Delivery is Evolving and How Retailers Are Adapting</div><div class="t" style="left:11.50px;top:236.73px;font-size:10px;color:#2b3a4e;font-weight:bold;letter-spacing:0.05px;">to the changes in the market</div><div class="t" style="left:11.50px;top:256.89px;font-size:8.4px;color:#828b98;letter-spacing:0.36px;">Lorem ipsum dolor sit amet, consectetur adipiscing elit, sed do</div><div class="t" style="left:11.50px;top:269.89px;font-size:8.4px;color:#828b98;letter-spacing:0.36px;">eiusmod tempor incididunt ut labore....</div><svg style="left:11.50px;top:310.00px;width:10px;height:11.5px;color:#8f98a5;"><use href="#i-click"/></svg><div class="t" style="left:26.80px;top:312.04px;font-size:10px;color:#6f7a88;letter-spacing:0.25px;">142</div><svg style="left:56.00px;top:310.30px;width:11.3px;height:10.4px;color:#8f98a5;"><use href="#i-like"/></svg><div class="t" style="left:72.30px;top:312.04px;font-size:10px;color:#6f7a88;letter-spacing:0.55px;">54</div><svg style="left:96.50px;top:310.80px;width:10.8px;height:10px;color:#8f98a5;"><use href="#i-cmt"/></svg><div class="t" style="left:112.30px;top:312.04px;font-size:10px;color:#6f7a88;letter-spacing:0.55px;">29</div><svg style="left:136.00px;top:311.60px;width:12px;height:7.2px;color:#8f98a5;"><use href="#i-share2"/></svg><div class="t" style="left:152.30px;top:312.04px;font-size:10px;color:#6f7a88;letter-spacing:0.3px;">12</div><svg class="av" style="left:288.4px;top:306.5px" viewBox="0 0 18 18"><rect width="18" height="18" fill="#4a4238"/><ellipse cx="9" cy="8" rx="3.600" ry="4.400" fill="#d9b49a"/><path d="M5.200 6.500C5.500 3.500 7 2.500 9 2.500s3.500 1 3.800 4C11.500 5 10.500 4.600 9 4.600S6.500 5 5.200 6.500z" fill="#2a2622"/><path d="M2.500 18c.5-3.500 3-5 6.500-5s6 1.500 6.500 5z" fill="#2a2622"/></svg><svg class="av" style="left:299.8px;top:306.5px" viewBox="0 0 18 18"><rect width="18" height="18" fill="#6f7f96"/><ellipse cx="9" cy="8" rx="3.600" ry="4.400" fill="#d2a78c"/><path d="M5.200 6.500C5.500 3.500 7 2.500 9 2.500s3.500 1 3.800 4C11.500 5 10.500 4.600 9 4.600S6.500 5 5.200 6.500z" fill="#3a2e28"/><path d="M2.500 18c.5-3.500 3-5 6.500-5s6 1.500 6.500 5z" fill="#3a2e28"/></svg><svg class="av" style="left:311.2px;top:306.5px" viewBox="0 0 18 18"><rect width="18" height="18" fill="#cfc8c0"/><ellipse cx="9" cy="8" rx="3.600" ry="4.400" fill="#e0b090"/><path d="M5.200 6.500C5.500 3.500 7 2.500 9 2.500s3.500 1 3.800 4C11.500 5 10.500 4.600 9 4.600S6.500 5 5.200 6.500z" fill="#b87850"/><path d="M2.500 18c.5-3.500 3-5 6.500-5s6 1.500 6.500 5z" fill="#c98a60"/></svg><div class="av" style="left:322.6px;top:306.5px;background:#8b95a5"></div><div class="t" style="left:328.20px;top:313.04px;font-size:5.5px;color:#e8ebf0;">+9</div><div class="div"></div><svg style="left:12.00px;top:347.40px;width:9px;height:9px;color:#87909d;"><use href="#i-cal"/></svg><div class="t" style="left:26.80px;top:348.35px;font-size:8.8px;color:#7d8795;letter-spacing:0.2px;">Schedule</div><svg style="left:281.30px;top:347.20px;width:8.8px;height:8.8px;"><use href="#i-shr"/></svg><div class="t" style="left:296.30px;top:348.35px;font-size:8.8px;color:#1d6fe0;letter-spacing:0.15px;">Share now</div></div>
<div class="card" style="left:450.4px;top:609px"><svg style="left:11.00px;top:10.90px;width:21.5px;height:21.5px;"><use href="#i-tw"/></svg><div class="t" style="left:38.30px;top:12.64px;font-size:6.1px;color:#969eaa;letter-spacing:0.47px;">Mar 16th 2021</div><div class="t" style="left:38.30px;top:22.78px;font-size:9px;color:#2f3d52;letter-spacing:0.14px;-webkit-text-stroke:.25px #2f3d52;">Twitter - SocialHP</div><div class="dot" style="left:338.700px;top:17.2px"></div><div class="dot" style="left:338.700px;top:20.6px"></div><div class="dot" style="left:338.700px;top:24.0px"></div><div class="t" style="left:11.50px;top:47.60px;font-size:8.5px;color:#7a8492;letter-spacing:0.29px;">The idea of doing things “virtually” has now become as normal as going to the</div><div class="t" style="left:11.50px;top:60.60px;font-size:8.5px;color:#7a8492;letter-spacing:0.29px;">grocery store to buy milk...</div><div class="img"><svg width="329" height="121.300" viewBox="0 0 329 121" preserveAspectRatio="none"><use href="#img2" width="329" height="121"/></svg><svg width="329" height="121.300" viewBox="0 0 329 121" preserveAspectRatio="none"><g font-family="Liberation Sans, Arial, sans-serif" font-weight="bold" text-anchor="middle"><text x="233" y="7.400" font-size="8.400" fill="#d6963a" textLength="34" lengthAdjust="spacingAndGlyphs">COVID-19</text><text x="233" y="19.500" font-size="8.400" fill="#d6963a" textLength="68" lengthAdjust="spacingAndGlyphs">Vaccination Center</text><text x="233.400" y="51.200" font-size="13.400" fill="#2d2f92" textLength="68" lengthAdjust="spacingAndGlyphs">Pre-Scheduled</text><text x="233.400" y="66.800" font-size="13.400" fill="#2d2f92" textLength="66.500" lengthAdjust="spacingAndGlyphs">Appointments</text><text x="233" y="82.200" font-size="13.400" fill="#2d2f92" textLength="22" lengthAdjust="spacingAndGlyphs">Only</text></g></svg></div><div class="t" style="left:11.50px;top:222.73px;font-size:10px;color:#2b3a4e;font-weight:bold;letter-spacing:0.1px;">The Buzzy, Chatty, Out-of-Control Rise of Clubhouse</div><div class="t" style="left:11.50px;top:256.89px;font-size:8.4px;color:#828b98;letter-spacing:0.36px;">Lorem ipsum dolor sit amet, consectetur adipiscing elit, sed do eiusmod tempor</div><div class="t" style="left:11.50px;top:269.89px;font-size:8.4px;color:#828b98;letter-spacing:0.36px;">incididunt ut labore....</div><svg style="left:11.50px;top:310.00px;width:10px;height:11.5px;color:#8f98a5;"><use href="#i-click"/></svg><div class="t" style="left:26.80px;top:312.04px;font-size:10px;color:#6f7a88;letter-spacing:0.25px;">142</div><svg style="left:56.00px;top:310.30px;width:11.3px;height:10.4px;color:#8f98a5;"><use href="#i-like"/></svg><div class="t" style="left:72.30px;top:312.04px;font-size:10px;color:#6f7a88;letter-spacing:0.55px;">54</div><svg style="left:96.50px;top:310.80px;width:10.8px;height:10px;color:#8f98a5;"><use href="#i-cmt"/></svg><div class="t" style="left:112.30px;top:312.04px;font-size:10px;color:#6f7a88;letter-spacing:0.55px;">29</div><svg style="left:136.00px;top:311.60px;width:12px;height:7.2px;color:#8f98a5;"><use href="#i-share2"/></svg><div class="t" style="left:152.30px;top:312.04px;font-size:10px;color:#6f7a88;letter-spacing:0.3px;">12</div><svg class="av" style="left:288.4px;top:306.5px" viewBox="0 0 18 18"><rect width="18" height="18" fill="#4a4238"/><ellipse cx="9" cy="8" rx="3.600" ry="4.400" fill="#d9b49a"/><path d="M5.200 6.500C5.500 3.500 7 2.500 9 2.500s3.500 1 3.800 4C11.500 5 10.500 4.600 9 4.600S6.500 5 5.200 6.500z" fill="#2a2622"/><path d="M2.500 18c.5-3.500 3-5 6.500-5s6 1.500 6.500 5z" fill="#2a2622"/></svg><svg class="av" style="left:299.8px;top:306.5px" viewBox="0 0 18 18"><rect width="18" height="18" fill="#6f7f96"/><ellipse cx="9" cy="8" rx="3.600" ry="4.400" fill="#d2a78c"/><path d="M5.200 6.500C5.500 3.500 7 2.500 9 2.500s3.500 1 3.800 4C11.500 5 10.500 4.600 9 4.600S6.500 5 5.200 6.500z" fill="#3a2e28"/><path d="M2.500 18c.5-3.500 3-5 6.500-5s6 1.500 6.500 5z" fill="#3a2e28"/></svg><svg class="av" style="left:311.2px;top:306.5px" viewBox="0 0 18 18"><rect width="18" height="18" fill="#cfc8c0"/><ellipse cx="9" cy="8" rx="3.600" ry="4.400" fill="#e0b090"/><path d="M5.200 6.500C5.500 3.500 7 2.500 9 2.500s3.500 1 3.800 4C11.500 5 10.500 4.600 9 4.600S6.500 5 5.200 6.500z" fill="#b87850"/><path d="M2.500 18c.5-3.500 3-5 6.500-5s6 1.500 6.500 5z" fill="#c98a60"/></svg><div class="av" style="left:322.6px;top:306.5px;background:#8b95a5"></div><div class="t" style="left:328.20px;top:313.04px;font-size:5.5px;color:#e8ebf0;">+9</div><div class="div"></div><svg style="left:12.00px;top:347.40px;width:9px;height:9px;color:#87909d;"><use href="#i-cal"/></svg><div class="t" style="left:26.80px;top:348.35px;font-size:8.8px;color:#7d8795;letter-spacing:0.2px;">Schedule</div><svg style="left:281.30px;top:347.20px;width:8.8px;height:8.8px;"><use href="#i-shr"/></svg><div class="t" style="left:296.30px;top:348.35px;font-size:8.8px;color:#1d6fe0;letter-spacing:0.15px;">Share now</div></div>
<div class="card" style="left:814.6px;top:609px"><svg style="left:11.00px;top:10.90px;width:21.5px;height:21.5px;"><use href="#i-li"/></svg><div class="t" style="left:38.30px;top:12.64px;font-size:6.1px;color:#969eaa;letter-spacing:0.47px;">Mar 16th 2021</div><div class="t" style="left:38.30px;top:22.78px;font-size:9px;color:#2f3d52;letter-spacing:-0.05px;-webkit-text-stroke:.25px #2f3d52;">Facebook Business – SocialHP</div><div class="dot" style="left:338.700px;top:17.2px"></div><div class="dot" style="left:338.700px;top:20.6px"></div><div class="dot" style="left:338.700px;top:24.0px"></div><div class="t" style="left:11.50px;top:47.60px;font-size:8.5px;color:#7a8492;letter-spacing:0.29px;">The idea of doing things “virtually” has now become as normal as going to the</div><div class="t" style="left:11.50px;top:60.60px;font-size:8.5px;color:#7a8492;letter-spacing:0.29px;">grocery store to buy milk...</div><div class="img"><svg width="329" height="121.300" viewBox="0 0 329 121" preserveAspectRatio="none"><use href="#img3" width="329" height="121"/></svg></div><div class="t" style="left:11.50px;top:222.73px;font-size:10px;color:#2b3a4e;font-weight:bold;letter-spacing:0.05px;">I love the earnest Google reviews of vaccination sites</div><div class="t" style="left:11.50px;top:256.89px;font-size:8.4px;color:#828b98;letter-spacing:0.36px;">Lorem ipsum dolor sit amet, consectetur adipiscing elit, sed do eiusmod tempor</div><div class="t" style="left:11.50px;top:269.89px;font-size:8.4px;color:#828b98;letter-spacing:0.36px;">incididunt ut labore....</div><svg style="left:11.50px;top:310.00px;width:10px;height:11.5px;color:#8f98a5;"><use href="#i-click"/></svg><div class="t" style="left:26.80px;top:312.04px;font-size:10px;color:#6f7a88;letter-spacing:0.25px;">142</div><svg style="left:56.00px;top:310.30px;width:11.3px;height:10.4px;color:#8f98a5;"><use href="#i-like"/></svg><div class="t" style="left:72.30px;top:312.04px;font-size:10px;color:#6f7a88;letter-spacing:0.55px;">54</div><svg style="left:96.50px;top:310.80px;width:10.8px;height:10px;color:#8f98a5;"><use href="#i-cmt"/></svg><div class="t" style="left:112.30px;top:312.04px;font-size:10px;color:#6f7a88;letter-spacing:0.55px;">29</div><svg style="left:136.00px;top:311.60px;width:12px;height:7.2px;color:#8f98a5;"><use href="#i-share2"/></svg><div class="t" style="left:152.30px;top:312.04px;font-size:10px;color:#6f7a88;letter-spacing:0.3px;">12</div><svg class="av" style="left:288.4px;top:306.5px" viewBox="0 0 18 18"><rect width="18" height="18" fill="#4a4238"/><ellipse cx="9" cy="8" rx="3.600" ry="4.400" fill="#d9b49a"/><path d="M5.200 6.500C5.500 3.500 7 2.500 9 2.500s3.500 1 3.800 4C11.500 5 10.500 4.600 9 4.600S6.500 5 5.200 6.500z" fill="#2a2622"/><path d="M2.500 18c.5-3.500 3-5 6.500-5s6 1.500 6.500 5z" fill="#2a2622"/></svg><svg class="av" style="left:299.8px;top:306.5px" viewBox="0 0 18 18"><rect width="18" height="18" fill="#6f7f96"/><ellipse cx="9" cy="8" rx="3.600" ry="4.400" fill="#d2a78c"/><path d="M5.200 6.500C5.500 3.500 7 2.500 9 2.500s3.500 1 3.800 4C11.500 5 10.500 4.600 9 4.600S6.500 5 5.200 6.500z" fill="#3a2e28"/><path d="M2.500 18c.5-3.500 3-5 6.500-5s6 1.500 6.500 5z" fill="#3a2e28"/></svg><svg class="av" style="left:311.2px;top:306.5px" viewBox="0 0 18 18"><rect width="18" height="18" fill="#cfc8c0"/><ellipse cx="9" cy="8" rx="3.600" ry="4.400" fill="#e0b090"/><path d="M5.200 6.500C5.500 3.500 7 2.500 9 2.500s3.500 1 3.800 4C11.500 5 10.500 4.600 9 4.600S6.500 5 5.200 6.500z" fill="#b87850"/><path d="M2.500 18c.5-3.500 3-5 6.500-5s6 1.500 6.500 5z" fill="#c98a60"/></svg><div class="av" style="left:322.6px;top:306.5px;background:#8b95a5"></div><div class="t" style="left:328.20px;top:313.04px;font-size:5.5px;color:#e8ebf0;">+9</div><div class="div"></div><svg style="left:12.00px;top:347.40px;width:9px;height:9px;color:#87909d;"><use href="#i-cal"/></svg><div class="t" style="left:26.80px;top:348.35px;font-size:8.8px;color:#7d8795;letter-spacing:0.2px;">Schedule</div><svg style="left:281.30px;top:347.20px;width:8.8px;height:8.8px;"><use href="#i-shr"/></svg><div class="t" style="left:296.30px;top:348.35px;font-size:8.8px;color:#1d6fe0;letter-spacing:0.15px;">Share now</div></div>
</body>
</html>
